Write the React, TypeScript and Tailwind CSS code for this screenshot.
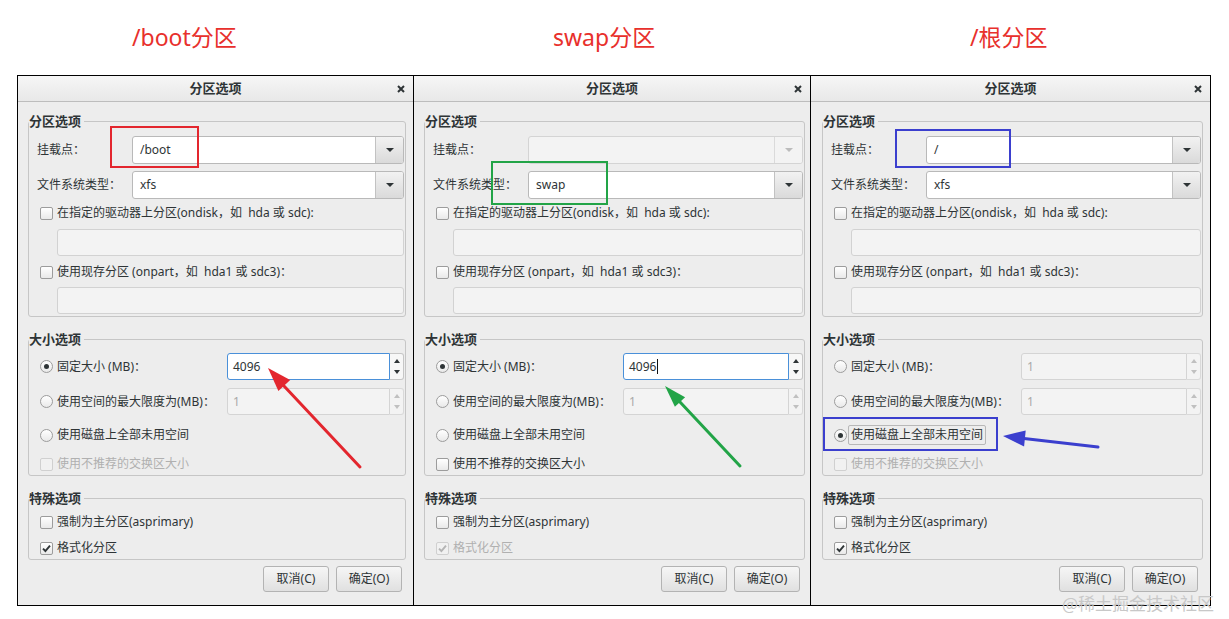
import React from 'react';

const UI: React.CSSProperties = { fontFamily: '"Noto Sans", "Noto Sans CJK SC", sans-serif' };

function Check({ checked = false, disabled = false }: { checked?: boolean; disabled?: boolean }) {
  return (
    <span
      className={`w-[13px] h-[13px] shrink-0 rounded-[2px] border flex items-center justify-center ${
        disabled ? 'border-[#d0d0d0] bg-[#f1f1f1]' : 'border-[#9c9c9c] bg-gradient-to-b from-white to-[#e9e9e9]'
      }`}
    >
      {checked && (
        <svg width="9" height="9" viewBox="0 0 9 9">
          <path d="M1 4.6 L3.4 7 L8 1.6" fill="none" stroke={disabled ? '#b4b4b4' : '#2e3436'} strokeWidth="1.9" />
        </svg>
      )}
    </span>
  );
}

function Radio({ on = false }: { on?: boolean }) {
  return (
    <span className="w-[13px] h-[13px] shrink-0 rounded-full border border-[#9c9c9c] bg-gradient-to-b from-white to-[#e9e9e9] flex items-center justify-center">
      {on && <span className="w-[5px] h-[5px] rounded-full bg-[#2e3436]" />}
    </span>
  );
}

function Combo({ value, disabled = false }: { value: string; disabled?: boolean }) {
  return (
    <div
      className={`flex-1 h-[28px] flex rounded-[3px] border overflow-hidden ${
        disabled ? 'border-[#d4d4d4] bg-[#f3f3f3]' : 'border-[#b9b9b9] bg-white'
      }`}
    >
      <div className="flex-1 flex items-center pl-[7px] text-[12px] text-[#2e3436]">{value}</div>
      <div
        className={`w-[28px] flex items-center justify-center border-l ${
          disabled ? 'border-[#dadada] bg-[#f3f3f3]' : 'border-[#c2c2c2] bg-gradient-to-b from-[#f2f2f2] to-[#dadada]'
        }`}
      >
        <svg width="8" height="4" viewBox="0 0 8 4">
          <path d="M0 0 H8 L4 4 Z" fill={disabled ? '#bcbcbc' : '#2e3436'} />
        </svg>
      </div>
    </div>
  );
}

function Spin({ value, focused = false, cursor = false }: { value: string; focused?: boolean; cursor?: boolean }) {
  return (
    <div className="flex-1 h-[27px] flex">
      <div
        className={`flex-1 flex items-center pl-[5px] rounded-l-[3px] border text-[12px] ${
          focused ? 'border-[#4a90d9] bg-white text-[#2e3436]' : 'border-[#d4d4d4] bg-[#f3f3f3] text-[#a9a9a9]'
        }`}
      >
        {value}
        {cursor && <span className="w-px h-[15px] bg-[#111] ml-[1px]" />}
      </div>
      <div
        className={`w-[14px] flex flex-col items-center justify-between py-[5px] rounded-r-[3px] border border-l-0 ${
          focused ? 'border-[#c6c6c6] bg-[#f7f7f7]' : 'border-[#d9d9d9] bg-[#f3f3f3]'
        }`}
      >
        <svg width="6" height="4" viewBox="0 0 6 4">
          <path d="M0 4 L3 0 L6 4 Z" fill={focused ? '#2e3436' : '#c0c0c0'} />
        </svg>
        <svg width="6" height="4" viewBox="0 0 6 4">
          <path d="M0 0 L6 0 L3 4 Z" fill={focused ? '#2e3436' : '#c0c0c0'} />
        </svg>
      </div>
    </div>
  );
}

function Group({ title, className, children }: { title: string; className: string; children: React.ReactNode }) {
  return (
    <fieldset className={`border border-[#c6c6c6] rounded-[3px] p-0 min-w-0 ${className}`}>
      <legend className="text-[13px] leading-[16px] font-bold text-[#2e3436] pr-[3px]">{title}</legend>
      {children}
    </fieldset>
  );
}

type DialogProps = {
  outer: string;
  fs: string;
  btn: string;
  mount: string;
  mountDisabled?: boolean;
  fsType: string;
  mode: 'fixed' | 'all';
  fixedValue: string;
  cursor?: boolean;
  swapEnabled?: boolean;
  formatDisabled?: boolean;
};

function Dialog(p: DialogProps) {
  const txt = 'text-[12px] leading-[18px] text-[#2e3436]';
  const dis = 'text-[12px] leading-[18px] text-[#b0b0b0]';
  return (
    <div className={`h-[531px] flex flex-col bg-[#ededed] border-black ${p.outer}`}>
      <div className="h-[26px] shrink-0 relative flex items-center justify-center bg-gradient-to-b from-[#f6f6f6] to-[#e8e8e8] border-b border-[#bdbdbd]">
        <span className="text-[13px] font-bold text-[#2e3436]">分区选项</span>
        <svg className="absolute right-[8px] top-[9px]" width="8" height="8" viewBox="0 0 8 8">
          <path d="M1 1 L7 7 M7 1 L1 7" stroke="#2e3436" strokeWidth="2" />
        </svg>
      </div>
      <div className="flex flex-col pt-[11px]">
        <Group title="分区选项" className={p.fs}>
          <div className="flex flex-col pl-[8px] pr-[1px] pt-[7px] pb-[2px]">
            <div className="flex items-center">
              <span className={`w-[95px] shrink-0 ${txt}`}>挂载点：</span>
              <Combo value={p.mount} disabled={p.mountDisabled} />
            </div>
            <div className="flex items-center mt-[7px]">
              <span className={`w-[95px] shrink-0 ${txt}`}>文件系统类型：</span>
              <Combo value={p.fsType} />
            </div>
            <div className="flex items-center h-[18px] mt-[5px] pl-[3px] gap-[4px]">
              <Check />
              <span className={txt}>在指定的驱动器上分区(ondisk，如&nbsp; hda 或 sdc):</span>
            </div>
            <div className="h-[27px] mt-[7px] ml-[20px] rounded-[3px] border border-[#d2d2d2] bg-[#f3f3f3]" />
            <div className="flex items-center h-[18px] mt-[7px] pl-[3px] gap-[4px]">
              <Check />
              <span className={txt}>使用现存分区 (onpart，如&nbsp; hda1 或 sdc3)：</span>
            </div>
            <div className="h-[27px] mt-[6px] ml-[20px] rounded-[3px] border border-[#d2d2d2] bg-[#f3f3f3]" />
          </div>
        </Group>

        <Group title="大小选项" className={`mt-[14px] ${p.fs}`}>
          <div className="flex flex-col pl-[8px] pr-[1px] pt-[6px] pb-[2px]">
            <div className="flex items-center">
              <div className="w-[190px] shrink-0 flex items-center pl-[3px] gap-[4px]">
                <Radio on={p.mode === 'fixed'} />
                <span className={txt}>固定大小 (MB)：</span>
              </div>
              <Spin value={p.fixedValue} focused={p.mode === 'fixed'} cursor={p.cursor} />
            </div>
            <div className="flex items-center mt-[8px]">
              <div className="w-[190px] shrink-0 flex items-center pl-[3px] gap-[4px]">
                <Radio />
                <span className={txt}>使用空间的最大限度为(MB)：</span>
              </div>
              <Spin value="1" />
            </div>
            <div className="flex items-center h-[18px] mt-[11px] pl-[3px] gap-[4px]">
              <Radio on={p.mode === 'all'} />
              {p.mode === 'all' ? (
                <span className={`${txt} -ml-[3px] px-[2px] border border-[#b8b8b8] rounded-[2px]`}>使用磁盘上全部未用空间</span>
              ) : (
                <span className={txt}>使用磁盘上全部未用空间</span>
              )}
            </div>
            <div className="flex items-center h-[18px] mt-[11px] pl-[3px] gap-[4px]">
              <Check disabled={!p.swapEnabled} />
              <span className={p.swapEnabled ? txt : dis}>使用不推荐的交换区大小</span>
            </div>
          </div>
        </Group>

        <Group title="特殊选项" className={`mt-[14px] ${p.fs}`}>
          <div className="flex flex-col pl-[8px] pr-[1px] pt-[7px] pb-[2px]">
            <div className="flex items-center h-[18px] pl-[3px] gap-[4px]">
              <Check />
              <span className={txt}>强制为主分区(asprimary)</span>
            </div>
            <div className="flex items-center h-[18px] mt-[8px] pl-[3px] gap-[4px]">
              <Check checked disabled={p.formatDisabled} />
              <span className={p.formatDisabled ? dis : txt}>格式化分区</span>
            </div>
          </div>
        </Group>

        <div className={`flex justify-end gap-[7px] mt-[6px] ${p.btn}`}>
          <button className="w-[66px] h-[26px] rounded-[3px] border border-[#b3b3b3] bg-gradient-to-b from-[#f6f6f6] to-[#e0e0e0] text-[12px] text-[#2e3436]">
            取消(C)
          </button>
          <button className="w-[66px] h-[26px] rounded-[3px] border border-[#b3b3b3] bg-gradient-to-b from-[#f6f6f6] to-[#e0e0e0] text-[12px] text-[#2e3436]">
            确定(O)
          </button>
        </div>
      </div>
    </div>
  );
}

export default function App() {
  return (
    <div className="relative w-[1229px] h-[619px] bg-white overflow-hidden" style={UI}>
      <div className="h-[75px] flex items-center text-[23px] leading-none text-[#e8302c]" style={{ fontFamily: '"Noto Sans", "Noto Sans CJK SC", sans-serif' }}>
        <span className="ml-[132px] w-[421px] shrink-0">/boot分区</span>
        <span className="w-[417px] shrink-0">swap分区</span>
        <span>/根分区</span>
      </div>
      <div className="flex ml-[17px]">
        <div className="w-[397px] shrink-0">
          <Dialog
            outer="border"
            fs="ml-[10px] mr-[7px]"
            btn="mr-[11px]"
            mount="/boot"
            fsType="xfs"
            mode="fixed"
            fixedValue="4096"
          />
        </div>
        <div className="w-[397px] shrink-0">
          <Dialog
            outer="border-y border-r"
            fs="ml-[10px] mr-[5px]"
            btn="mr-[10px]"
            mount=""
            mountDisabled
            fsType="swap"
            mode="fixed"
            fixedValue="4096"
            cursor
            swapEnabled
            formatDisabled
          />
        </div>
        <div className="w-[400px] shrink-0">
          <Dialog
            outer="border-y border-r"
            fs="ml-[11px] mr-[7px]"
            btn="mr-[12px]"
            mount="/"
            fsType="xfs"
            mode="all"
            fixedValue="1"
          />
        </div>
      </div>

      <svg className="absolute left-0 top-0 pointer-events-none" width="1229" height="619" viewBox="0 0 1229 619">
        <rect x="111" y="127" width="87" height="40" fill="none" stroke="#e3262e" strokeWidth="2" />
        <rect x="492" y="162" width="115" height="42" fill="none" stroke="#22a447" strokeWidth="2" />
        <rect x="896" y="130" width="114" height="37" fill="none" stroke="#3b3fce" strokeWidth="2" />
        <rect x="824" y="418" width="173" height="32" fill="none" stroke="#3b3fce" strokeWidth="2" />

        <line x1="360" y1="467" x2="284" y2="386" stroke="#e3262e" strokeWidth="3" strokeLinecap="round" />
        <polygon points="268,368 290.2,380.1 278.4,391" fill="#e3262e" />

        <line x1="740" y1="466" x2="680" y2="402" stroke="#22a447" strokeWidth="3" strokeLinecap="round" />
        <polygon points="665,386 685.1,397.2 674.9,406.8" fill="#22a447" />

        <line x1="1098" y1="447" x2="1024" y2="438.5" stroke="#3b3fce" strokeWidth="3" strokeLinecap="round" />
        <polygon points="1003,436 1025.7,430.5 1024.1,446.5" fill="#3b3fce" />
      </svg>

      <div className="absolute left-[1062px] top-[592px] text-[17px] leading-[22px] text-[#c8c8c8]" style={{ fontFamily: '"Noto Sans CJK SC", sans-serif' }}>
        @稀土掘金技术社区
      </div>
    </div>
  );
}
